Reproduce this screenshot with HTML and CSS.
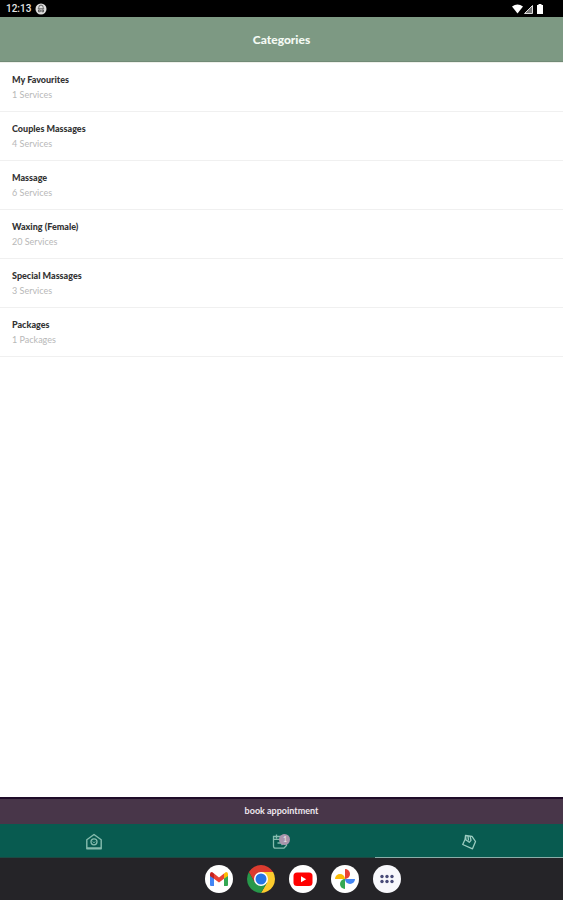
FILE: index.html
```html
<!DOCTYPE html>
<html lang="en">
<head>
<meta charset="utf-8">
<meta name="viewport" content="width=device-width, initial-scale=1">
<title>Categories</title>
<link rel="stylesheet" href="styles.css">
</head>
<body>
<div class="status">
  <span class="clock">12:13</span>
  <svg class="notice" viewBox="0 0 12 12" width="12" height="12" aria-hidden="true"><circle cx="6" cy="6" r="5.5" fill="#ddd"/><path d="M3.8 5.4V4.3a2.2 2.2 0 0 1 4.4 0v1.1M2.8 5.8h6.4M3.5 8.8h1.8V7H3.5zM6.9 8.8h1.6V7H6.9z" fill="none" stroke="#444" stroke-width=".8"/></svg>
  <svg class="signals" viewBox="0 0 34 12" width="34" height="12" aria-hidden="true"><path d="M0 3.600Q5.500-.6 11 3.600L5.500 10.500z" fill="#fff"/><path d="M12.500 10.500 20.500 2.500v8z" fill="#777" stroke="#ddd" stroke-width="1"/><path d="M25 2h1.500V1h3v1H31v9h-6z" fill="#fff"/></svg>
</div>
<header class="header"><h1>Categories</h1></header>
<main class="list">
  <a class="row" href="#favourites"><span class="name">My Favourites</span><span class="count">1 Services</span></a>
  <a class="row" href="#couples"><span class="name">Couples Massages</span><span class="count">4 Services</span></a>
  <a class="row" href="#massage"><span class="name">Massage</span><span class="count">6 Services</span></a>
  <a class="row" href="#waxing"><span class="name">Waxing (Female)</span><span class="count">20 Services</span></a>
  <a class="row" href="#special"><span class="name">Special Massages</span><span class="count">3 Services</span></a>
  <a class="row" href="#packages"><span class="name">Packages</span><span class="count">1 Packages</span></a>
</main>
<button class="book" type="button">book appointment</button>
<nav class="tabs">
  <a class="tab" href="#home" aria-label="Home"><svg viewBox="0 0 18 18" width="18" height="18"><path d="M1.800 6.800 9 1.500l7.200 5.300v8.900H1.800zM2 15h14" fill="none" stroke="#86bcae" stroke-width="1.400" stroke-linejoin="round"/><circle cx="9" cy="8.800" r="3" fill="none" stroke="#86bcae" stroke-width="1.300"/><path d="M7.800 8.500 9 9.800l1.200-1.300" fill="none" stroke="#86bcae"/></svg></a>
  <a class="tab" href="#appointments" aria-label="Appointments"><svg viewBox="0 0 18 18" width="18" height="18"><path d="M1.500 3.500h13v9l-2.500 2.700H3.500q-2 0-2-2zM1.500 6.300h13M4.500 1.500v4M11.500 1.500v4M5.500 10h6M9.500 8l2 2-2 2" fill="none" stroke="#86bcae" stroke-width="1.300"/></svg><span class="badge">1</span></a>
  <a class="tab active" href="#book" aria-label="Book"><svg viewBox="0 0 18 18" width="18" height="18"><path d="M5.500 2.500 12 3.300l3.500 5.200-3 7.300-9.800-4.300 2.300-5zM5.500 2.500l.5 4.500 3.300 2.300 1.700-2-.8-3.800M8 3.200l.5 4.300" fill="none" stroke="#9bccc0" stroke-width="1.300" stroke-linejoin="round"/></svg></a>
</nav>
<footer class="dock">
  <button class="app" type="button" aria-label="Gmail"><svg viewBox="0 0 28 28"><circle cx="14" cy="14" r="14" fill="#fff"/><path d="M5 9.500l4 3V21H6q-1 0-1-1z" fill="#4285f4"/><path d="M23 9.500l-4 3V21h3q1 0 1-1z" fill="#34a853"/><path d="M9 8.500l5 4 5-4v5.300L14 17.500 9 13.800z" fill="#ea4335"/><path d="M5 10V9q0-2 2-2l2 1.500v5.300L5 11z" fill="#c5221f"/><path d="M23 10V9q0-2-2-2l-2 1.500v5.300L23 11z" fill="#fbbc04"/></svg></button>
  <button class="app" type="button" aria-label="Chrome"><svg viewBox="0 0 28 28"><path d="M14 7h12.120A14 14 0 0 1 14 28l6.060-10.500z" fill="#fccb2d"/><path d="M7.940 17.500 1.880 7A14 14 0 0 0 14 28l6.060-10.500z" fill="#27984a"/><path d="M14 7h12.120A14 14 0 0 0 1.880 7l6.060 10.500z" fill="#db3b2f"/><circle cx="14" cy="14" r="7" fill="#fff"/><circle cx="14" cy="14" r="5.500" fill="#2475e5"/></svg></button>
  <button class="app" type="button" aria-label="YouTube"><svg viewBox="0 0 28 28"><circle cx="14" cy="14" r="14" fill="#fff"/><rect x="4.500" y="7.500" width="19" height="13.500" rx="3.500" fill="#f00"/><path d="M12 11.300v6l5.200-3z" fill="#fff"/></svg></button>
  <button class="app" type="button" aria-label="Photos"><svg viewBox="0 0 28 28"><circle cx="14" cy="14" r="14" fill="#fff"/><path d="M14 4a5 5 0 0 1 0 10z" fill="#ea4335"/><path d="M24 14a5 5 0 0 1-10 0z" fill="#4285f4"/><path d="M14 24a5 5 0 0 1 0-10z" fill="#34a853"/><path d="M4 14a5 5 0 0 1 10 0z" fill="#fbbc04"/></svg></button>
  <button class="app" type="button" aria-label="All apps"><svg viewBox="0 0 28 28"><circle cx="14" cy="14" r="14" fill="#f8f8fc"/><g fill="#484b78"><circle cx="9" cy="11.500" r="1.700"/><circle cx="14" cy="11.500" r="1.700"/><circle cx="19" cy="11.500" r="1.700"/><circle cx="9" cy="16.500" r="1.700"/><circle cx="14" cy="16.500" r="1.700"/><circle cx="19" cy="16.500" r="1.700"/></g></svg></button>
</footer>
</body>
</html>
```
FILE: styles.css
```css
* {
  box-sizing: border-box;
}

body {
  margin: 0;
  min-height: 100vh;
  display: flex;
  flex-direction: column;
  background: #fff;
  font-family: Lato, "Liberation Sans", sans-serif;
}

button {
  border: 0;
  padding: 0;
  font: inherit;
}

.status {
  display: flex;
  align-items: center;
  gap: 4px;
  height: 17px;
  padding: 0 17px 0 6px;
  background: #000;
  color: #e4e4e4;
}

.clock {
  font: 500 10px/18px Roboto, sans-serif;
}

.signals {
  margin-left: auto;
}

.header {
  display: flex;
  align-items: center;
  justify-content: center;
  height: 45px;
  padding-top: 2px;
  background: #7d9983;
  border-bottom: 1px solid #718a76;
}

.header h1 {
  margin: 0;
  font-size: 12px;
  line-height: 16px;
  font-weight: 900;
  color: #f4faf4;
}

.list {
  flex: 1;
  border-top: 1px solid #eef0ea;
}

.row {
  display: flex;
  flex-direction: column;
  padding: 9px 12px;
  border-bottom: 1px solid #f0f0f0;
  text-decoration: none;
  font-size: 9px;
}

.name {
  line-height: 15px;
  font-weight: 900;
  color: #333;
}

.count {
  line-height: 15px;
  color: #b8b8b8;
}

.book {
  height: 27px;
  border-top: 2px solid #1f0c29;
  background: #483649;
  color: #eee6ee;
  font-size: 9px;
  line-height: 12px;
  font-weight: 700;
  padding-bottom: 2px;
}

.tabs {
  display: grid;
  grid-template-columns: repeat(3, 1fr);
  height: 34px;
  background: #085b50;
}

.tab {
  position: relative;
  display: flex;
  align-items: center;
  justify-content: center;
  padding-top: 2px;
  border-bottom: 1px solid #1d4943;
}

.tab.active {
  border-bottom-color: #8aaea9;
}

.badge {
  position: absolute;
  top: 10px;
  left: calc(50% - 2px);
  width: 11px;
  height: 11px;
  border-radius: 50%;
  background: #a995ac;
  color: #eee;
  font-size: 7px;
  line-height: 11px;
  text-align: center;
}

.dock {
  display: flex;
  align-items: center;
  justify-content: center;
  gap: 14px;
  height: 42px;
  padding-left: 42px;
  background: #252428;
}

.app {
  width: 28px;
  height: 28px;
  background: none;
}

.app svg {
  display: block;
  width: 100%;
}
```
